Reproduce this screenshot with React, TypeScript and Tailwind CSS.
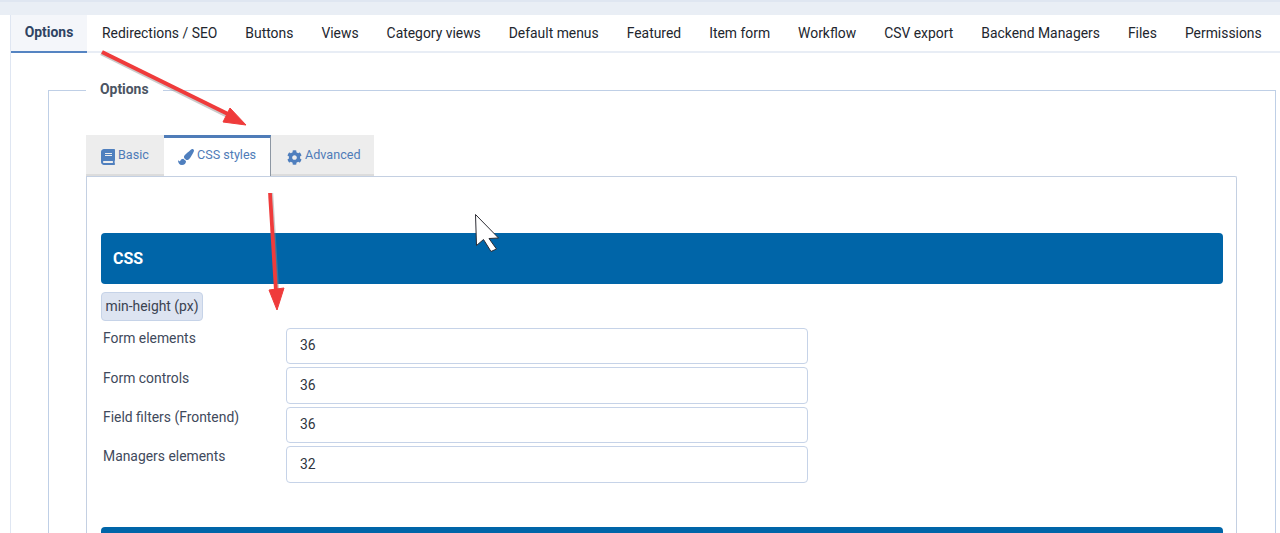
import { FaBook, FaCog, FaPaintBrush } from "react-icons/fa";

const menuTabs = [
  "Redirections / SEO",
  "Buttons",
  "Views",
  "Category views",
  "Default menus",
  "Featured",
  "Item form",
  "Workflow",
  "CSV export",
  "Backend Managers",
  "Files",
  "Permissions",
];

const rows = [
  { label: "Form elements", value: "36", cls: "h-[36px] mb-[3px]", labelCls: "pt-0" },
  { label: "Form controls", value: "36", cls: "h-[37px] mb-[3px]", labelCls: "pt-px" },
  { label: "Field filters (Frontend)", value: "36", cls: "h-[36px] mb-[3px]", labelCls: "pt-0" },
  { label: "Managers elements", value: "32", cls: "h-[37px]", labelCls: "pt-0" },
];

const Overlay = () => (
  <svg className="absolute left-0 top-0 pointer-events-none" width="1280" height="533" viewBox="0 0 1280 533">
    <g fill="#8a8a8a" stroke="#8a8a8a" strokeLinejoin="round" opacity="0.45">
      <path d="M101 53.5 L231 118" strokeWidth="3.6" fill="none" />
      <path d="M271.5 193 L277.5 292" strokeWidth="3.4" fill="none" />
    </g>
    <g fill="#ef3b3b" stroke="#ef3b3b" strokeLinejoin="round">
      <path d="M102 52 L232 116" strokeWidth="4" fill="none" />
      <path d="M246 125 L230 108 L223 122 Z" strokeWidth="1" />
      <path d="M270 193 L276 292" strokeWidth="3.8" fill="none" />
      <path d="M277 310 L269 290 L284 288 Z" strokeWidth="1" />
    </g>
    <path
      d="M475.5 214.5 L498.5 238 L489 238.5 L496.5 249 L491 251.5 L483.5 239.5 L476.5 245.5 Z"
      fill="#fff"
      stroke="#2b2b33"
      strokeWidth="1"
      strokeLinejoin="round"
    />
  </svg>
);

export default function App() {
  return (
    <div className="relative h-[533px] w-[1280px] overflow-hidden bg-white font-['Roboto',sans-serif] text-[13.9px] text-[#22262e]">
      <div className="h-[15px] border-t-2 border-[#dfe6f1] bg-[#e9eef5]" />
      <div className="flex h-[518px]">
        <div className="w-[10px] shrink-0 bg-white" />
        <div className="min-w-0 flex-1 border-l border-[#dfe6f2]">
          <div className="flex h-[38px] border-b-2 border-[#e8edf5]">
            <div className="mr-px flex h-[38px] w-[76px] items-center justify-center border-b-2 border-[#5584c2] bg-[#f4f6fa] pb-[2px] font-bold text-[#2f4463]">
              Options
            </div>
            {menuTabs.map((t) => (
              <div key={t} className="flex h-[36px] items-center whitespace-nowrap px-[14px]">
                {t}
              </div>
            ))}
          </div>

          <fieldset className="ml-[37px] mt-[27px] w-[1228px] border border-[#bfcfe6] pl-[37px] pr-[38px]">
            <legend className="h-[20px] px-[14px] pb-[2px] text-[13.9px] font-bold leading-[18px] text-[#4b5563]">Options</legend>

            <div className="mt-[35px] flex h-[41px] text-[12.6px] text-[#4f7cb8]">
              <div className="flex w-[78px] items-center border-b-2 border-[#dcdcdc] bg-[#ededed] pl-[15px]">
                <FaBook className="mr-[3px] mt-[5px] w-[14px] text-[16px] text-[#4f7fbe]" />
                <span className="mt-px">Basic</span>
              </div>
              <div className="flex w-[107px] items-center border-r border-t-[3px] border-[#8d97a3] border-t-[#4f7cb8] bg-white pl-[14px]">
                <FaPaintBrush className="mr-[3px] text-[16px] text-[#4f7fbe]" />
                <span className="mb-[4px]">CSS styles</span>
              </div>
              <div className="flex w-[103px] items-center border-b-2 border-[#dcdcdc] bg-[#ededed] pl-[16px]">
                <FaCog className="mr-[3px] mt-[5px] text-[15px] text-[#4f7fbe]" />
                <span className="mt-px">Advanced</span>
              </div>
            </div>

            <div className="h-[400px] rounded-tr-[2px] border-l border-r border-t border-[#c4d0e2] pl-[14px] pr-[13px] pt-[56px]">
              <div className="flex h-[51px] items-center rounded-[4px] bg-[#0065a8] pl-[12px] text-[16px] font-bold text-white">
                CSS
              </div>
              <div className="mt-[8px] inline-flex h-[29px] w-[102px] items-center justify-center rounded-[4px] border border-[#c6d3e8] bg-[#dde4f1] pb-px text-[#3a4250]">
                min-height (px)
              </div>
              <div className="mt-[7px]">
                {rows.map((r) => (
                  <div key={r.label} className={`flex ${r.cls}`}>
                    <div className={`w-[185px] pl-[2px] leading-[20px] text-[#3f4a5c] ${r.labelCls}`}>{r.label}</div>
                    <div className="flex w-[522px] items-center rounded-[4px] border border-[#c6d3e8] bg-white pb-px pl-[13px] text-[#2f3540]">
                      {r.value}
                    </div>
                  </div>
                ))}
              </div>
              <div className="mt-[44px] h-[51px] rounded-[4px] bg-[#0065a8]" />
            </div>
          </fieldset>
        </div>
      </div>
      <Overlay />
    </div>
  );
}
